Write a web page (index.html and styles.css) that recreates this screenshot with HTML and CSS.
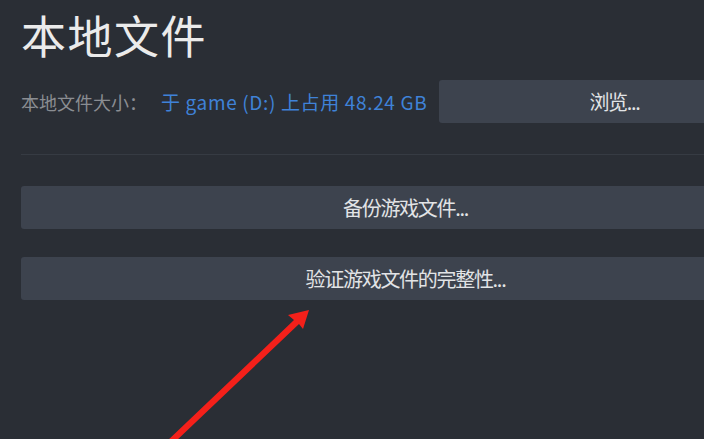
FILE: index.html
```html
<!DOCTYPE html>
<html lang="zh-CN">
<head>
<meta charset="utf-8">
<link rel="stylesheet" href="styles.css">
</head>
<body>
<div class="page">
  <h1 class="title">本地文件</h1>
  <div class="info-row">
    <span class="label">本地文件大小：</span>
    <span class="value">于 game (D:) 上占用 48.24 GB</span>
    <div class="btn btn-browse">浏览...</div>
  </div>
  <div class="sep"></div>
  <div class="btn btn-wide">备份游戏文件...</div>
  <div class="btn btn-wide btn-verify">验证游戏文件的完整性...</div>
</div>
<svg class="arrow" width="704" height="439" viewBox="0 0 704 439">
  <polygon points="166,442 294,320 288,315 309,310 303,329 299,324 175,442" fill="#f4201a"/>
</svg>
</body>
</html>
```
FILE: styles.css
```css
html, body {
  margin: 0;
  padding: 0;
}
body {
  width: 704px;
  height: 439px;
  overflow: hidden;
  background: #2a2e35;
  font-family: "Noto Sans CJK SC", "Noto Sans", sans-serif;
  position: relative;
}
.page {
  width: 769px;
  padding-left: 21px;
  padding-top: 7px;
}
.title {
  margin: 0;
  font-size: 45px;
  font-weight: 400;
  line-height: 56px;
  color: #ebebeb;
  letter-spacing: 1.5px;
}
.info-row {
  display: flex;
  align-items: center;
  margin-top: 17px;
  height: 43px;
}
.label {
  font-size: 18px;
  color: #8a8d92;
}
.value {
  font-size: 19px;
  letter-spacing: 0.65px;
  color: #3f82d8;
  margin-left: 14px;
}
.btn {
  background: #3d434e;
  border-radius: 3px;
  color: #e2e4e6;
  font-size: 20px;
  letter-spacing: -1.3px;
  height: 43px;
  display: flex;
  align-items: center;
  justify-content: center;
}
.btn-browse {
  width: 351px;
  margin-left: auto;
}
.sep {
  height: 1px;
  background: #363b43;
  margin-top: 31px;
}
.btn-wide {
  margin-top: 31px;
}
.btn-verify {
  margin-top: 28px;
}
.arrow {
  position: absolute;
  left: 0;
  top: 0;
}
```
